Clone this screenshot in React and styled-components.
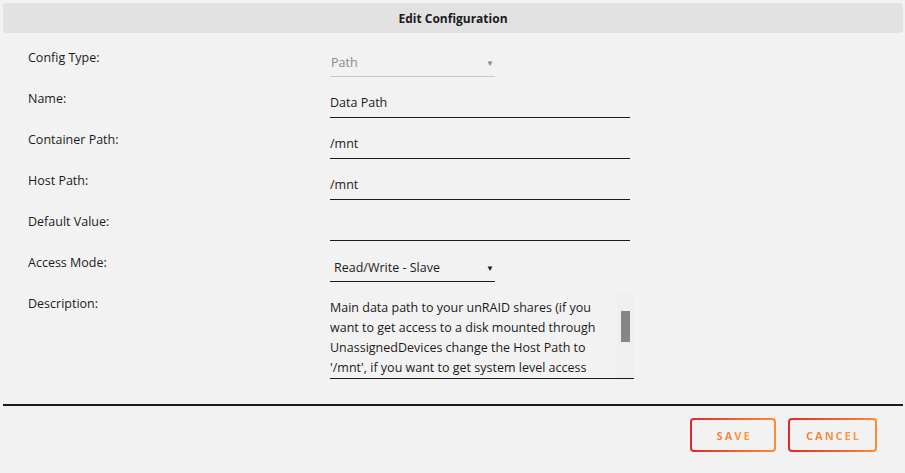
import React from 'react';
import styled, { createGlobalStyle } from 'styled-components';

const GlobalStyle = createGlobalStyle`
  html, body {
    margin: 0;
    padding: 0;
    background: #f2f2f2;
  }
  body {
    font-family: "Open Sans", "Liberation Sans", sans-serif;
    color: #1c1b1b;
  }
`;

const fields = [
  { label: 'Config Type:', kind: 'select', value: 'Path', disabled: true },
  { label: 'Name:', kind: 'input', value: 'Data Path' },
  { label: 'Container Path:', kind: 'input', value: '/mnt' },
  { label: 'Host Path:', kind: 'input', value: '/mnt' },
  { label: 'Default Value:', kind: 'input', value: '' },
  { label: 'Access Mode:', kind: 'select', value: 'Read/Write - Slave' },
];

const description =
  "Main data path to your unRAID shares (if you want to get access to a disk mounted through UnassignedDevices change the Host Path to '/mnt', if you want to get system level access change the Access Mode to 'Read/Write - Slave')";

function App() {
  return (
    <Page>
      <GlobalStyle />
      <Header>Edit Configuration</Header>
      <Form>
        {fields.map((f) => (
          <Row key={f.label}>
            <Label>{f.label}</Label>
            {f.kind === 'input' ? (
              <TextInput>{f.value}</TextInput>
            ) : (
              <Select $disabled={f.disabled}>
                <span>{f.value}</span>
                <Arrow $disabled={f.disabled}>▼</Arrow>
              </Select>
            )}
          </Row>
        ))}
        <Row $tall>
          <Label>Description:</Label>
          <DescBox>
            <DescText>{description}</DescText>
            <ScrollTrack>
              <Thumb />
            </ScrollTrack>
          </DescBox>
        </Row>
      </Form>
      <Divider />
      <Footer>
        <OutlineButton>
          <GradientText>SAVE</GradientText>
        </OutlineButton>
        <OutlineButton>
          <GradientText>CANCEL</GradientText>
        </OutlineButton>
      </Footer>
    </Page>
  );
}

export default App;

const Page = styled.div`
  width: 905px;
  height: 473px;
  box-sizing: border-box;
  padding: 3px 2px 0 3px;
  background: #f2f2f2;
  display: flex;
  flex-direction: column;
`;

const Header = styled.div`
  height: 30px;
  background: #e2e2e2;
  border-radius: 4px;
  display: flex;
  align-items: center;
  justify-content: center;
  font-size: 12px;
  font-weight: 700;
  color: #1c1b1b;
`;

const Form = styled.div`
  display: flex;
  flex-direction: column;
  padding-top: 15px;
`;

const Row = styled.div`
  display: flex;
  align-items: flex-start;
  height: ${(p) => (p.$tall ? '85px' : '41px')};
`;

const Label = styled.div`
  width: 327px;
  box-sizing: border-box;
  padding-left: 25px;
  padding-top: 2px;
  font-size: 12.5px;
  line-height: 16px;
`;

const TextInput = styled.div`
  width: 300px;
  height: 28px;
  border-bottom: 1px solid #1c1b1b;
  font-size: 12.5px;
  line-height: 27px;
  white-space: pre;
`;

const Select = styled.div`
  width: 165px;
  height: 28px;
  border-bottom: 1px solid ${(p) => (p.$disabled ? '#c8c8c8' : '#1c1b1b')};
  display: flex;
  align-items: center;
  justify-content: space-between;
  font-size: 12.5px;
  color: ${(p) => (p.$disabled ? '#8a8a8a' : '#1c1b1b')};
  & > span {
    padding-left: ${(p) => (p.$disabled ? '1px' : '4px')};
  }
`;

const Arrow = styled.span`
  font-size: 8px;
  padding-right: 1px;
  color: ${(p) => (p.$disabled ? '#8a8a8a' : '#1c1b1b')};
`;

const DescBox = styled.div`
  width: 304px;
  height: 84px;
  border-bottom: 1px solid #1c1b1b;
  display: flex;
  overflow: hidden;
`;

const DescText = styled.div`
  flex: 1;
  font-size: 12.5px;
  line-height: 20px;
  padding: 4px 6px 0 0;
  overflow: hidden;
`;

const ScrollTrack = styled.div`
  width: 17px;
  flex-shrink: 0;
  background: #efefef;
  padding: 17px 0 0 4px;
  box-sizing: border-box;
`;

const Thumb = styled.div`
  width: 9px;
  height: 31px;
  background: #868686;
`;

const Divider = styled.div`
  margin-top: 25px;
  height: 2px;
  background: #1c1b1b;
`;

const Footer = styled.div`
  display: flex;
  justify-content: flex-end;
  gap: 12px;
  padding: 12px 26px 0 0;
`;

const OutlineButton = styled.button`
  height: 34px;
  padding: 0 16px;
  min-width: 86px;
  border: 2px solid transparent;
  border-radius: 4px;
  background: linear-gradient(#f2f2f2, #f2f2f2) padding-box,
    linear-gradient(90deg, #e22828, #ff8c2f) border-box;
  display: flex;
  align-items: center;
  justify-content: center;
  cursor: pointer;
`;

const GradientText = styled.span`
  font-family: "Open Sans", "Liberation Sans", sans-serif;
  font-size: 11px;
  font-weight: 700;
  letter-spacing: 2px;
  margin-right: -2px;
  background: linear-gradient(90deg, #f47a35, #ff9a3c);
  -webkit-background-clip: text;
  background-clip: text;
  color: transparent;
`;
